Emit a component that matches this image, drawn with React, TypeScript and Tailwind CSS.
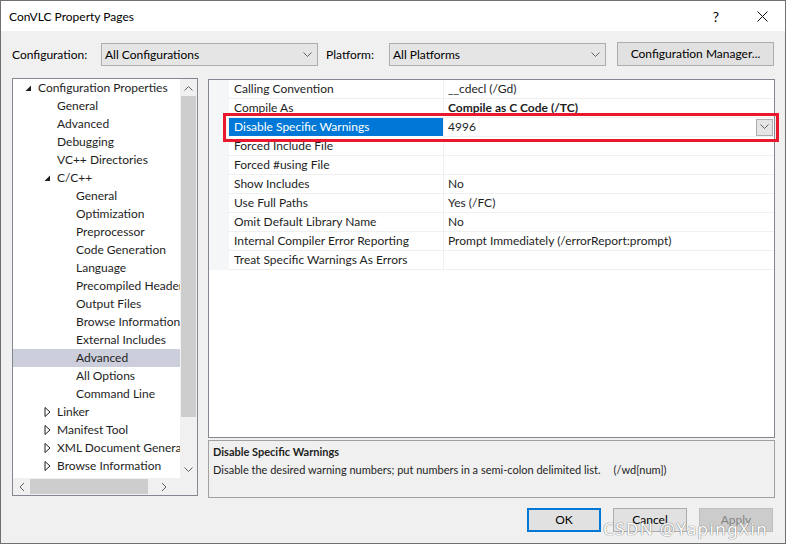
import React from "react";

const font = { fontFamily: 'Lato, "Noto Sans", sans-serif' };

function Chevron({ className = "" }: { className?: string }) {
  return (
    <svg width="9" height="6" viewBox="0 0 9 6" className={className}>
      <path d="M0.5 0.5 L4.5 4.5 L8.5 0.5" fill="none" stroke="#606060" strokeWidth="1" />
    </svg>
  );
}

function Expanded() {
  return (
    <svg width="7" height="7" viewBox="0 0 7 7">
      <path d="M6 0.5 L6 6 L0.5 6 Z" fill="#1e1e1e" />
    </svg>
  );
}

function Collapsed() {
  return (
    <svg width="7" height="10" viewBox="0 0 7 10">
      <path d="M1 0.5 L6 5 L1 9.5 Z" fill="none" stroke="#1e1e1e" strokeWidth="1" />
    </svg>
  );
}

type Node = { label: string; level: number; state?: "open" | "closed"; selected?: boolean };

const tree: Node[] = [
  { label: "Configuration Properties", level: 0, state: "open" },
  { label: "General", level: 1 },
  { label: "Advanced", level: 1 },
  { label: "Debugging", level: 1 },
  { label: "VC++ Directories", level: 1 },
  { label: "C/C++", level: 1, state: "open" },
  { label: "General", level: 2 },
  { label: "Optimization", level: 2 },
  { label: "Preprocessor", level: 2 },
  { label: "Code Generation", level: 2 },
  { label: "Language", level: 2 },
  { label: "Precompiled Headers", level: 2 },
  { label: "Output Files", level: 2 },
  { label: "Browse Information", level: 2 },
  { label: "External Includes", level: 2 },
  { label: "Advanced", level: 2, selected: true },
  { label: "All Options", level: 2 },
  { label: "Command Line", level: 2 },
  { label: "Linker", level: 1, state: "closed" },
  { label: "Manifest Tool", level: 1, state: "closed" },
  { label: "XML Document Generator", level: 1, state: "closed" },
  { label: "Browse Information", level: 1, state: "closed" },
];

const rows: { name: string; value: string; bold?: boolean; selected?: boolean }[] = [
  { name: "Calling Convention", value: "__cdecl (/Gd)" },
  { name: "Compile As", value: "Compile as C Code (/TC)", bold: true },
  { name: "Disable Specific Warnings", value: "4996", selected: true },
  { name: "Forced Include File", value: "" },
  { name: "Forced #using File", value: "" },
  { name: "Show Includes", value: "No" },
  { name: "Use Full Paths", value: "Yes (/FC)" },
  { name: "Omit Default Library Name", value: "No" },
  { name: "Internal Compiler Error Reporting", value: "Prompt Immediately (/errorReport:prompt)" },
  { name: "Treat Specific Warnings As Errors", value: "" },
];

const indent = ["pl-[12px]", "pl-[31px]", "pl-[50px]"];

export default function App() {
  return (
    <div
      className="relative w-[786px] h-[544px] bg-[#f0f0f0] border border-[#707070] flex flex-col text-[12px] text-[#000] overflow-hidden"
      style={font}
    >
      {/* Title bar */}
      <div className="h-[30px] bg-white flex items-center shrink-0">
        <div className="pl-[8px] flex-1 pt-[1px]">ConVLC Property Pages</div>
        <div className="w-[46px] h-full flex items-center justify-center text-[14px]">?</div>
        <div className="w-[46px] h-full flex items-center justify-center">
          <svg width="11" height="11" viewBox="0 0 11 11">
            <path d="M0.5 0.5 L10.5 10.5 M10.5 0.5 L0.5 10.5" stroke="#111" strokeWidth="1" />
          </svg>
        </div>
      </div>

      {/* Config row */}
      <div className="flex items-center h-[23px] mt-[12px] pl-[11px] shrink-0">
        <span className="w-[89px]">Configuration:</span>
        <div className="w-[217px] h-[23px] bg-[#e5e5e5] border border-[#adadad] flex items-center pl-[3px] pr-[5px]">
          <span className="flex-1">All Configurations</span>
          <Chevron />
        </div>
        <span className="ml-[8px] w-[63px]">Platform:</span>
        <div className="w-[217px] h-[23px] bg-[#e5e5e5] border border-[#adadad] flex items-center pl-[3px] pr-[5px]">
          <span className="flex-1">All Platforms</span>
          <Chevron />
        </div>
        <div className="ml-[11px] w-[157px] h-[24px] -mt-[2px] bg-[#e1e1e1] border border-[#adadad] flex items-center justify-center">
          Configuration Manager...
        </div>
      </div>

      {/* Main */}
      <div className="flex mt-[12px] pl-[11px] h-[421px] shrink-0">
        {/* Tree */}
        <div className="w-[186px] h-[418px] border border-[#828790] bg-white flex flex-col">
          <div className="flex flex-1 min-h-0">
            <div className="flex-1 min-w-0 overflow-hidden">
              {tree.map((n, i) => (
                <div
                  key={i}
                  className={`h-[18px] flex items-center whitespace-nowrap ${indent[n.level]} ${
                    n.selected ? "bg-[#cccedb]" : ""
                  }`}
                >
                  <span className="w-[13px] shrink-0 flex items-center">
                    {n.state === "open" ? <Expanded /> : n.state === "closed" ? <Collapsed /> : null}
                  </span>
                  <span className="shrink-0 text-[#1e1e1e]">{n.label}</span>
                </div>
              ))}
            </div>
            <div className="w-[17px] shrink-0 bg-[#f0f0f0] flex flex-col">
              <div className="h-[17px] flex items-center justify-center">
                <Chevron className="rotate-180" />
              </div>
              <div className="h-[321px] mx-[1px] bg-[#cdcdcd]" />
              <div className="flex-1" />
              <div className="h-[17px] flex items-center justify-center">
                <Chevron />
              </div>
            </div>
          </div>
          <div className="h-[17px] flex bg-[#f0f0f0] shrink-0">
            <div className="flex-1 flex items-center">
              <div className="w-[17px] flex justify-center">
                <Chevron className="rotate-90" />
              </div>
              <div className="w-[118px] h-[15px] bg-[#cdcdcd]" />
              <div className="flex-1 flex justify-center">
                <Chevron className="-rotate-90" />
              </div>
            </div>
            <div className="w-[17px]" />
          </div>
        </div>

        {/* Right panel */}
        <div className="ml-[10px] w-[567px] flex flex-col">
          <div className="relative mt-[1px] h-[359px] border border-[#828790] bg-white">
            {rows.map((r, i) => (
              <div key={i} className="flex h-[19px]">
                <div className="w-[20px] bg-[#f5f6f8]" />
                <div
                  className={`w-[215px] flex items-center pl-[5px] border-b border-r border-[#f0f0f0] ${
                    r.selected ? "bg-[#0078d7] text-white border-b-white" : "text-[#1e1e1e]"
                  }`}
                >
                  {r.name}
                </div>
                <div className="flex-1 flex items-center pl-[4px] border-b border-[#f0f0f0] text-[#1e1e1e]">
                  <span className={`flex-1 ${r.bold ? "font-bold" : ""}`}>{r.value}</span>
                  {r.selected && (
                    <div className="w-[17px] h-[17px] mr-[1px] bg-[#e5e5e5] border border-[#adadad] flex items-center justify-center">
                      <Chevron />
                    </div>
                  )}
                </div>
              </div>
            ))}
            <div className="absolute left-[14px] top-[33px] w-[556px] h-[29px] border-[3px] border-[#e8192c]" />
          </div>
          <div className="mt-[2px] h-[58px] border border-[#a0a0a0] bg-[#f0f0f0] px-[4px] pt-[2px] text-[11px]">
            <div className="font-bold text-[#1e1e1e] h-[18px] flex items-center">Disable Specific Warnings</div>
            <div className="text-[#1e1e1e] h-[18px] flex items-center">
              <span>Disable the desired warning numbers; put numbers in a semi-colon delimited list.</span>
              <span className="ml-[13px]">(/wd[num])</span>
            </div>
          </div>
        </div>
      </div>

      {/* Buttons */}
      <div className="flex justify-end gap-[12px] pr-[12px] mt-[9px]">
        <div className="w-[74px] h-[24px] border-2 border-[#0078d7] bg-[#e1e1e1] flex items-center justify-center">OK</div>
        <div className="w-[74px] h-[24px] border border-[#adadad] bg-[#e1e1e1] flex items-center justify-center">Cancel</div>
        <div className="w-[74px] h-[24px] border border-[#bfbfbf] bg-[#cccccc] flex items-center justify-center text-[#838383]">
          Apply
        </div>
      </div>

      {/* Watermark */}
      <div
        className="absolute left-[602px] top-[515px] text-[17px] text-white tracking-[1.4px]"
        style={{ fontFamily: '"Noto Sans", sans-serif', textShadow: "0 0 1px #777, 0 0 1px #777" }}
      >
        CSDN @YapingXin
      </div>
    </div>
  );
}
